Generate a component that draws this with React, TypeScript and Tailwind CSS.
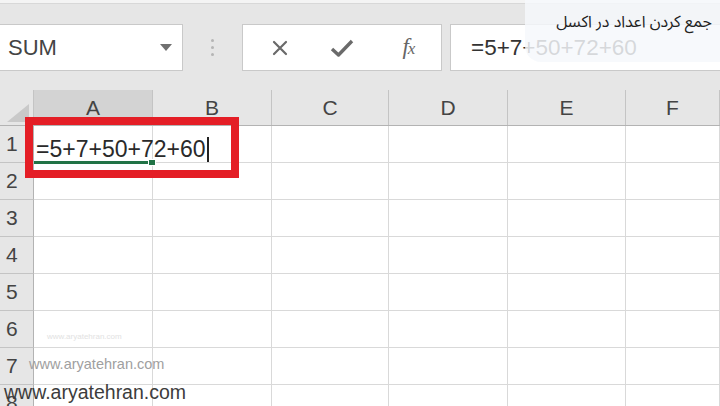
import React from 'react'

const cols = [
  { key: 'A', w: 'w-[119px]' },
  { key: 'B', w: 'w-[119px]' },
  { key: 'C', w: 'w-[117px]' },
  { key: 'D', w: 'w-[119px]' },
  { key: 'E', w: 'w-[118px]' },
  { key: 'F', w: 'w-[94px]' },
]

const rows = [1, 2, 3, 4, 5, 6, 7, 8]

function CloseIcon() {
  return (
    <svg width="16" height="16" viewBox="0 0 16 16" className="text-[#6a6a6a]">
      <path d="M2 2 L14 14 M14 2 L2 14" stroke="currentColor" strokeWidth="2.2" strokeLinecap="round" />
    </svg>
  )
}

function CheckIcon() {
  return (
    <svg width="24" height="20" viewBox="0 0 24 20" className="text-[#6a6a6a]">
      <path d="M2 11 L8.5 17 L22 3" stroke="currentColor" strokeWidth="3.4" fill="none" strokeLinejoin="round" />
    </svg>
  )
}

export default function App() {
  return (
    <div className="relative w-[720px] h-[406px] overflow-hidden bg-[#e6e6e6] font-['Liberation_Sans',Arial,sans-serif]">
      {/* top strip */}
      <div className="h-[4px] bg-[#f4f4f4] border-b border-[#d8d8d8]" />

      {/* formula bar */}
      <div className="mt-[20px] flex h-[47px]">
        <div className="w-[183px] flex items-center justify-between bg-white border border-[#c9c9c9] border-l-0 pl-[8px] pr-[10px]">
          <span className="text-[22px] text-[#444]">SUM</span>
          <svg width="12" height="7" viewBox="0 0 12 7">
            <path d="M0 0 H12 L6 7 Z" fill="#707070" />
          </svg>
        </div>
        <div className="w-[59px] flex flex-col items-center justify-center gap-[4px]">
          <span className="w-[3px] h-[3px] rounded-full bg-[#b5b5b5]" />
          <span className="w-[3px] h-[3px] rounded-full bg-[#b5b5b5]" />
          <span className="w-[3px] h-[3px] rounded-full bg-[#b5b5b5]" />
        </div>
        <div className="w-[200px] flex items-center bg-white border border-[#c9c9c9]">
          <div className="w-[70px] flex justify-center pl-[4px]">
            <CloseIcon />
          </div>
          <div className="w-[60px] flex justify-center">
            <CheckIcon />
          </div>
          <div className="w-[70px] flex justify-center pl-[4px]">
            <span className="font-['Liberation_Serif',serif] italic text-[23px] text-[#666] tracking-[-1px]">
              f<span className="text-[17px]">x</span>
            </span>
          </div>
        </div>
        <div className="flex-1 ml-[8px] flex items-center bg-white border border-[#c9c9c9] border-r-0 pl-[20px]">
          <span className="text-[22.5px] leading-[26px] text-[#333]">=5+7+50+72+60</span>
        </div>
      </div>

      {/* sheet */}
      <div className="mt-[19px]">
        <div className="flex h-[36px] border-b border-[#b3b3b3]">
          <div className="w-[34px] relative border-r border-[#c4c4c4]">
            <svg width="22" height="18" viewBox="0 0 22 18" className="absolute right-[4px] bottom-[3px]">
              <path d="M22 0 V18 H0 Z" fill="#c9c9c9" />
            </svg>
          </div>
          {cols.map((c) => (
            <div
              key={c.key}
              className={`${c.w} flex items-center justify-center border-r border-[#c4c4c4] text-[21px] text-[#444] ${
                c.key === 'A' ? 'bg-[#d3d3d3]' : ''
              }`}
            >
              {c.key}
            </div>
          ))}
        </div>

        {rows.map((r) => (
          <div key={r} className="flex h-[37px]">
            <div className="w-[34px] flex items-center pl-[6px] border-r border-[#b3b3b3] border-b border-b-[#c4c4c4] text-[21px] text-[#444]">
              {r}
            </div>
            {cols.map((c) => {
              const active = r === 1 && c.key === 'A'
              return (
                <div
                  key={c.key}
                  className={`${c.w} bg-white border-r border-b border-[#d9d9d9] relative ${active ? 'z-10' : ''}`}
                >
                  {active && (
                    <>
                      <div className="absolute left-[2px] top-[6px] flex items-center whitespace-nowrap text-[23px] text-[#2a2a2a]">
                        =5+7+50+72+60
                        <span className="ml-[1px] w-[2px] h-[25px] bg-[#222]" />
                      </div>
                      <div className="absolute left-0 right-[4px] bottom-[-2px] h-[3px] bg-[#217346]" />
                      <div className="absolute right-[-4px] bottom-[-4px] w-[8px] h-[7px] bg-[#217346] border border-white" />
                    </>
                  )}
                </div>
              )
            })}
          </div>
        ))}
      </div>

      {/* red highlight */}
      <div className="absolute z-20 left-[25px] top-[117px] w-[214px] h-[61px] border-[8px] border-[#e41e26]" />

      {/* notification */}
      <div className="absolute z-20 right-0 top-0 w-[195px] h-[62px] rounded-bl-[16px] bg-[rgba(245,248,252,0.84)] flex justify-end pt-[12px] pr-[8px]">
        <span dir="rtl" className="font-['Noto_Sans_Arabic','DejaVu_Sans',sans-serif] text-[16px] leading-[20px] text-[#222]">
          جمع کردن اعداد در اکسل
        </span>
      </div>

      {/* watermarks */}
      <div className="absolute z-20 left-[47px] top-[331px] text-[8px] text-[#e2e2e2]">www.aryatehran.com</div>
      <div className="absolute z-20 left-[29px] top-[355px] text-[14.5px] leading-[18px] text-[#a0a0a0]">www.aryatehran.com</div>
      <div className="absolute z-20 left-[4px] top-[380px] text-[19.5px] leading-[24px] text-[#3c3c3c]">www.aryatehran.com</div>
    </div>
  )
}
